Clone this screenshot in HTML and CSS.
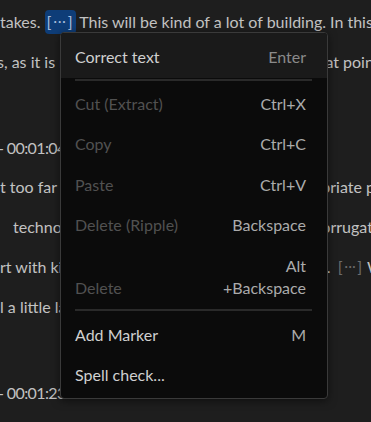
FILE: index.html
```html
<!DOCTYPE html>
<html lang="en">
<head>
    <meta charset="UTF-8">
    <meta name="viewport" content="width=device-width, initial-scale=1.0">
    <title>Transcript</title>
    <link rel="stylesheet" href="styles.css">
</head>
<body>
    <div class="transcript">
        <div class="para">
            <div class="line">takes. <span class="gap sel">[<b>···</b>]</span> This will be kind of a lot of building. In this e</div>
            <div class="line shift">s, as it is not going to be ready by then, so at that point</div>
        </div>
        <div class="head">- 00:01:04 -</div>
        <div class="para">
            <div class="line">t too far from the areas, so we need the appropriate place</div>
            <div class="line indent">technology, which is actually built with the corrugated</div>
            <div class="line">rt with kinds of steel and it can get quite heavy. <span class="gap">[<b>···</b>]</span> We</div>
            <div class="line">l a little later.</div>
        </div>
        <div class="head">- 00:01:23 -</div>
    </div>

    <div class="menu">
        <div class="item first">
            <span class="label">Correct text</span>
            <span class="key">Enter</span>
        </div>
        <div class="sep top"></div>
        <div class="item off">
            <span class="label">Cut (Extract)</span>
            <span class="key">Ctrl+X</span>
        </div>
        <div class="item off">
            <span class="label">Copy</span>
            <span class="key">Ctrl+C</span>
        </div>
        <div class="item off">
            <span class="label">Paste</span>
            <span class="key">Ctrl+V</span>
        </div>
        <div class="item off">
            <span class="label">Delete (Ripple)</span>
            <span class="key">Backspace</span>
        </div>
        <div class="item off tall">
            <span class="label">Delete</span>
            <span class="key">Alt<br>+Backspace</span>
        </div>
        <div class="sep"></div>
        <div class="item">
            <span class="label">Add Marker</span>
            <span class="key">M</span>
        </div>
        <div class="item">
            <span class="label">Spell check...</span>
        </div>
    </div>
</body>
</html>
```

FILE: styles.css
```css
*{
    margin: 0;
    padding: 0;
    box-sizing: border-box;
}
body{
    background-color: #1e1e1e;
    font-family: Lato, "Noto Sans", sans-serif;
    font-size: 16px;
    color: #c2c2c2;
    overflow: hidden;
    height: 422px;
    position: relative;
}
.transcript{
    padding-top: 2px;
}
.para{
    margin-bottom: 46px;
}
.line,
.head{
    height: 40px;
    line-height: 40px;
    white-space: nowrap;
}
.line.shift{
    margin-left: -3px;
}
.line.indent{
    padding-left: 13px;
}
.head{
    margin-left: -2px;
    margin-bottom: -1px;
    letter-spacing: -0.6px;
}
.gap{
    display: inline-block;
    color: #6c6c6c;
    line-height: 22px;
    padding: 0 1px 0 3px;
}
.gap b{
    font-weight: normal;
    font-size: 13px;
    letter-spacing: 0.5px;
    margin: 0 1px 0 2px;
    vertical-align: 2px;
}
.gap.sel{
    background-color: #0e3d78;
    color: #a8bedc;
    border-radius: 4px;
    height: 24px;
    line-height: 23px;
    padding: 0 3px 0 2px;
}
.gap.sel b{
    letter-spacing: 1px;
}

/* context menu */
.menu{
    position: absolute;
    left: 60px;
    top: 32px;
    width: 268px;
    background-color: #0b0b0b;
    border: 1px solid #3a3a3a;
    border-radius: 4px;
    padding-bottom: 3px;
    box-shadow: 0 2px 8px rgba(0,0,0,0.5);
}
.item{
    display: flex;
    justify-content: space-between;
    align-items: center;
    height: 40.5px;
    padding: 0 21px 0 14px;
    color: #d0d0d0;
}
.item.first{
    height: 45px;
    padding-top: 1px;
    background-color: #1a1a1a;
    border-radius: 3px 3px 0 0;
}
.item.first .key{
    color: #8a8a8a;
}
.item.off .label{
    color: #515151;
}
.item .key{
    color: #ababab;
    text-align: right;
}
.item.tall{
    height: auto;
    align-items: flex-end;
    padding-top: 10px;
    padding-bottom: 8px;
    line-height: 22px;
}
.sep{
    height: 2px;
    background-color: #2a2a2a;
    margin: 2px 15px 3px 14px;
}
.sep.top{
    margin-top: 1px;
    margin-bottom: 2px;
}
```
